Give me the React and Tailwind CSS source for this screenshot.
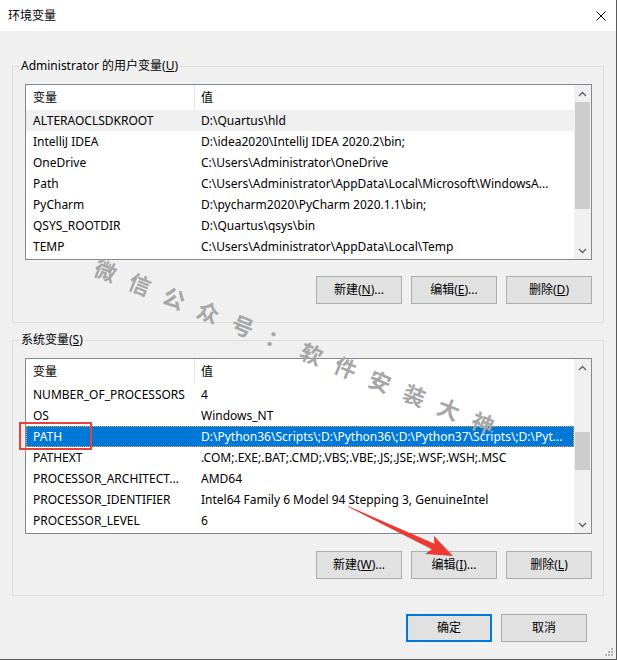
import React from 'react'

const userVars = [
  ['ALTERAOCLSDKROOT', 'D:\\Quartus\\hld'],
  ['IntelliJ IDEA', 'D:\\idea2020\\IntelliJ IDEA 2020.2\\bin;'],
  ['OneDrive', 'C:\\Users\\Administrator\\OneDrive'],
  ['Path', 'C:\\Users\\Administrator\\AppData\\Local\\Microsoft\\WindowsA...'],
  ['PyCharm', 'D:\\pycharm2020\\PyCharm 2020.1.1\\bin;'],
  ['QSYS_ROOTDIR', 'D:\\Quartus\\qsys\\bin'],
  ['TEMP', 'C:\\Users\\Administrator\\AppData\\Local\\Temp'],
]

const sysVars = [
  ['NUMBER_OF_PROCESSORS', '4'],
  ['OS', 'Windows_NT'],
  ['PATH', 'D:\\Python36\\Scripts\\;D:\\Python36\\;D:\\Python37\\Scripts\\;D:\\Pyt...'],
  ['PATHEXT', '.COM;.EXE;.BAT;.CMD;.VBS;.VBE;.JS;.JSE;.WSF;.WSH;.MSC'],
  ['PROCESSOR_ARCHITECT...', 'AMD64'],
  ['PROCESSOR_IDENTIFIER', 'Intel64 Family 6 Model 94 Stepping 3, GenuineIntel'],
  ['PROCESSOR_LEVEL', '6'],
]

function Chevron({ up }) {
  return (
    <svg width="9" height="6" viewBox="0 0 9 6" className="text-[#606060]">
      <path
        d={up ? 'M1 5 L4.5 1.5 L8 5' : 'M1 1 L4.5 4.5 L8 1'}
        fill="none"
        stroke="currentColor"
        strokeWidth="1.3"
      />
    </svg>
  )
}

function Scrollbar({ thumbTop, thumbHeight }) {
  return (
    <div className="flex w-[17px] shrink-0 flex-col bg-[#f0f0f0]">
      <div className="flex h-[17px] items-center justify-center">
        <Chevron up />
      </div>
      <div className="flex-1 px-[1px]">
        <div className={`${thumbTop} ${thumbHeight} bg-[#cdcdcd]`}></div>
      </div>
      <div className="flex h-[17px] items-center justify-center">
        <Chevron />
      </div>
    </div>
  )
}

function VarList({ rows, greyRow, blueRow, thumbTop, thumbHeight }) {
  return (
    <div className="flex h-[176px] border border-[#828790] bg-white">
      <div className="flex min-w-0 flex-1 flex-col">
        <div className="flex h-[25px] shrink-0">
          <div className="flex w-[169px] items-center border-r border-[#e5e5e5] pl-[7px]">变量</div>
          <div className="flex items-center pl-[6px]">值</div>
        </div>
        {rows.map(([name, value], i) => {
          let rowCls = 'text-black'
          if (i === greyRow) rowCls = 'bg-[#f0f0f0] text-black'
          if (i === blueRow) rowCls = 'bg-[#0078d7] text-white outline outline-1 outline-dotted -outline-offset-1 outline-[#f0a040]'
          return (
            <div key={name} className={`flex h-[21px] shrink-0 items-center ${rowCls}`}>
              <div className="w-[169px] shrink-0 overflow-hidden whitespace-nowrap pl-[7px]">{name}</div>
              <div className="min-w-0 flex-1 overflow-hidden whitespace-nowrap pl-[6px]">{value}</div>
            </div>
          )
        })}
      </div>
      <Scrollbar thumbTop={thumbTop} thumbHeight={thumbHeight} />
    </div>
  )
}

function Btn({ children, primary }) {
  return (
    <button
      className={`flex h-[28px] w-[86px] items-center justify-center bg-[#e1e1e1] text-[12px] text-black ${
        primary ? 'border-2 border-[#0078d7]' : 'border border-[#adadad]'
      }`}
    >
      {children}
    </button>
  )
}

function GroupLabel({ children }) {
  return (
    <div className="-mt-[9px] -ml-[6px] h-[16px] self-start bg-[#f0f0f0] px-[2px] leading-[16px]">
      {children}
    </div>
  )
}

export default function App() {
  return (
    <div className="relative flex h-[660px] w-[617px] flex-col overflow-hidden border-r border-b border-[#5a5a5a] bg-[#f0f0f0] font-['Noto_Sans','Noto_Sans_CJK_SC',sans-serif] text-[12px] text-black">
      {/* title bar */}
      <div className="flex h-[31px] shrink-0 items-center justify-between bg-white pl-[8px] pr-[10px]">
        <span>环境变量</span>
        <svg width="10" height="10" viewBox="0 0 10 10">
          <path d="M0.5 0.5 L9.5 9.5 M9.5 0.5 L0.5 9.5" stroke="#000" strokeWidth="1" fill="none" />
        </svg>
      </div>

      {/* user variables */}
      <div className="mx-[12px] mt-[35px] flex flex-col border border-[#dcdcdc] pb-[18px] pl-[12px] pr-[11px]">
        <GroupLabel>
          Administrator 的用户变量(<span className="underline">U</span>)
        </GroupLabel>
        <div className="mt-[10px]">
          <VarList rows={userVars} greyRow={0} thumbTop="mt-0" thumbHeight="h-[107px]" />
        </div>
        <div className="mt-[16px] flex justify-end gap-[9px]">
          <Btn>
            新建(<span className="underline">N</span>)...
          </Btn>
          <Btn>
            编辑(<span className="underline">E</span>)...
          </Btn>
          <Btn>
            删除(<span className="underline">D</span>)
          </Btn>
        </div>
      </div>

      {/* system variables */}
      <div className="mx-[12px] mt-[17px] flex flex-col border border-[#dcdcdc] pb-[16px] pl-[12px] pr-[11px]">
        <GroupLabel>
          系统变量(<span className="underline">S</span>)
        </GroupLabel>
        <div className="mt-[10px]">
          <VarList rows={sysVars} blueRow={2} thumbTop="mt-[56px]" thumbHeight="h-[38px]" />
        </div>
        <div className="mt-[17px] flex justify-end gap-[9px]">
          <Btn>
            新建(<span className="underline">W</span>)...
          </Btn>
          <Btn>
            编辑(<span className="underline">I</span>)...
          </Btn>
          <Btn>
            删除(<span className="underline">L</span>)
          </Btn>
        </div>
      </div>

      {/* dialog buttons */}
      <div className="mt-[18px] flex justify-end gap-[9px] pr-[29px]">
        <Btn primary>确定</Btn>
        <Btn>取消</Btn>
      </div>

      {/* resize grip */}
      <div className="mt-auto mb-[2px] mr-[2px] self-end">
        <svg width="9" height="9" viewBox="0 0 9 9">
          <rect x="6" y="0" width="2" height="2" fill="#b4b4b4" />
          <rect x="3" y="3" width="2" height="2" fill="#b4b4b4" />
          <rect x="6" y="3" width="2" height="2" fill="#b4b4b4" />
          <rect x="0" y="6" width="2" height="2" fill="#b4b4b4" />
          <rect x="3" y="6" width="2" height="2" fill="#b4b4b4" />
          <rect x="6" y="6" width="2" height="2" fill="#b4b4b4" />
        </svg>
      </div>

      {/* watermark */}
      <div className="pointer-events-none absolute left-[100px] top-[255px] origin-top-left rotate-[22deg] whitespace-nowrap text-[22px] font-bold leading-none tracking-[15px] text-[#a6a6a6] font-['Noto_Sans_CJK_SC',sans-serif]">
        微信公众号：软件安装大神
      </div>

      {/* annotation: red box + arrow */}
      <svg className="pointer-events-none absolute left-0 top-0" width="617" height="660" viewBox="0 0 617 660">
        <rect x="20" y="423" width="71" height="26" fill="none" stroke="#e8403a" strokeWidth="2" />
        <polygon
          points="348,506 434.4,543.8 433.8,535.8 453,556 425.2,553.9 431.8,549.2 348,506.8"
          fill="#ea3a33"
        />
      </svg>
    </div>
  )
}
